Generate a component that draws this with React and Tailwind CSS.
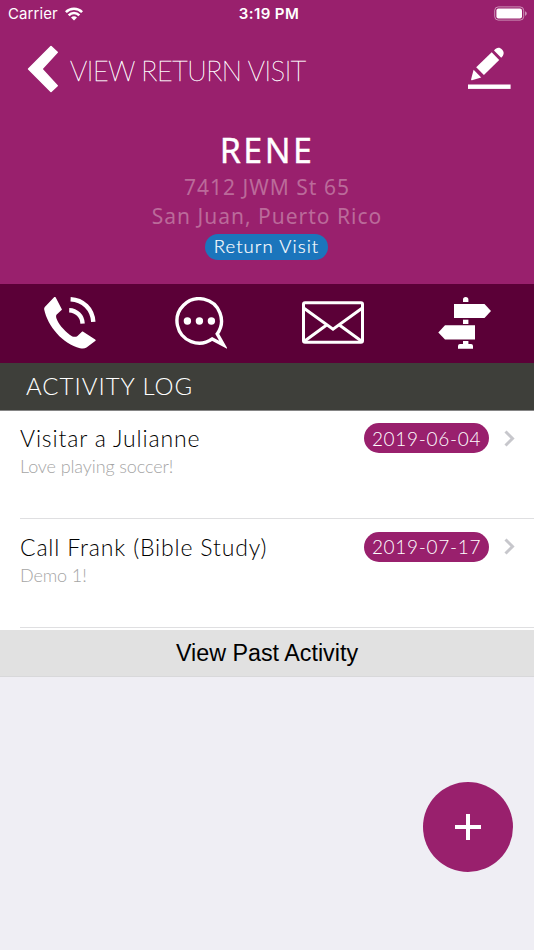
import React from "react";

const activities = [
  { id: 1, title: "Visitar a Julianne", note: "Love playing soccer!", date: "2019-06-04" },
  { id: 2, title: "Call Frank (Bible Study)", note: "Demo 1!", date: "2019-07-17" },
];

function StatusBar() {
  return (
    <div className="grid h-7 grid-cols-3 items-center pr-[7px] pl-2 font-['Inter',sans-serif] text-[15px] text-white">
      <div className="flex items-center gap-[7px]">
        <span className="tracking-[0.1px]">Carrier</span>
        <svg width="18" height="14" viewBox="0 0 18 14" fill="none" stroke="currentColor" strokeWidth="2.6">
          <path d="M0.9 5.1a11.5 11.5 0 0 1 16.2 0" />
          <path d="M3.7 8.3a7.4 7.4 0 0 1 10.6 0" />
          <path d="M9 13.6 6 10.6a4.3 4.3 0 0 1 6 0z" fill="currentColor" stroke="none" />
        </svg>
      </div>
      <div className="pl-[3px] text-center font-semibold tracking-[0.4px]">3:19 PM</div>
      <svg className="-mt-0.5 justify-self-end" width="33" height="15" viewBox="0 0 33 15">
        <rect x="0.7" y="0.9" width="29" height="13.2" rx="3.6" fill="none" stroke="#fff" strokeOpacity="0.5" />
        <rect x="2.4" y="2.6" width="25.6" height="9.8" rx="2" fill="#fff" />
        <path d="M31 5.3v4.6c1.2-.5 1.8-1.3 1.8-2.3S32.2 5.8 31 5.3z" fill="#fff" fillOpacity="0.5" />
      </svg>
    </div>
  );
}

function BackIcon() {
  return (
    <svg width="32" height="48" viewBox="0 0 32 48" fill="#fff" stroke="#fff" strokeWidth="1.6" strokeLinejoin="round">
      <path d="M24 1.6 30.2 7.3 14.8 24l15.4 16.7L24 46.4 1.6 24z" />
    </svg>
  );
}

function EditIcon() {
  return (
    <svg className="-mt-px" width="43" height="43" viewBox="0 0 43 43" fill="#fff">
      <path d="M26 3.5C28.5 0.3 31.5 0 34 2.4S36.2 8 33.2 10.7z" />
      <path d="M23.7 5.2 31.2 12.9 15.9 28 8.2 20.3z" />
      <path d="M5.6 22.8 13.2 30.5 4 33.3Q2.8 33.5 3.1 32.2z" />
      <rect x="0" y="37.500" width="42.6" height="4.4" />
    </svg>
  );
}

function PhoneIcon() {
  return (
    <svg width="52" height="52" viewBox="0 0 52 52">
      <path
        fill="#fff"
        d="M10.3 0 .8 10C.2 10.8 0 11.6.2 12.6 3.5 29 19 47.5 36 51.2 39 51.7 41 51.5 42.5 50.5L51.2 44C51.9 43.4 51.9 42.9 51.2 42.4L39.2 34.7C38.7 34.4 38.3 34.4 37.9 34.8L33.5 39C31.5 40.5 28.5 40 26 38 19.5 33 14 26.5 12.3 21 11.9 19 12 18 13 17.2L17.6 13.1C18 12.7 18 12.3 17.7 11.9L11.6.3C11.2-.3 10.8-.4 10.3 0z"
      />
      <path
        d="M26.6 2.2C39 2.8 48.5 12 49.3 24.9M25.2 13.2C32.5 13.4 38.4 19 38.6 26.6"
        fill="none"
        stroke="#fff"
        strokeWidth="4.4"
      />
    </svg>
  );
}

function ChatIcon() {
  return (
    <svg width="52" height="52" viewBox="0 0 52 52" fill="none" stroke="#fff" strokeWidth="3.4">
      <path d="M37.2 41.9A22.2 22.2 0 1 1 42.2 36.9L48.5 48z" />
      <g fill="#fff" stroke="none">
        <circle cx="12.4" cy="24" r="3.7" />
        <circle cx="24.4" cy="24" r="3.7" />
        <circle cx="36.4" cy="24" r="3.7" />
      </g>
    </svg>
  );
}

function MailIcon() {
  return (
    <svg width="62" height="43" viewBox="0 0 62 43" fill="none" stroke="#fff" strokeWidth="3">
      <rect x="1.5" y="1.8" width="59" height="39.4" rx="1.5" />
      <path d="M2 7.3 31 28.2 60 7.3M2 40.5 24.3 24.3M60 40.5 37.7 24.3" />
    </svg>
  );
}

function DirectionsIcon() {
  return (
    <svg width="53" height="52" viewBox="0 0 53 52" fill="#fff">
      <path d="M25 5V2.5Q25 0 27.7 0T30.4 2.5V5z" />
      <path d="M16 7H46.5L53 14 46.5 21H16z" />
      <path d="M25 22.7h5.4V27H25z" />
      <path d="M37 28.3H7L.3 35.5 7 42.6H37z" />
      <path d="M25 44h5.4v3H33Q35 47 35 49v2.8H20V49Q20 47 22 47h3z" />
    </svg>
  );
}

function ActivityRow({ activity }) {
  return (
    <div className="ml-5 h-[108.4px] border-b border-[#dfdfe1] pt-[12.3px] pr-[19px]">
      <div className="flex h-[30px] items-center">
        <h3 className="flex-1 text-[23px] leading-[30px] font-light tracking-[0.84px] text-black">{activity.title}</h3>
        <span className="flex h-[30px] w-[125px] items-center justify-center rounded-full bg-[#99206d] pt-px text-[19px] font-light tracking-[0.7px] text-white">
          {activity.date}
        </span>
        <svg className="ml-[15px]" width="11" height="17" viewBox="0 0 11 17" fill="none" stroke="#c7c7cc" strokeWidth="3">
          <path d="M1.5 1.5 8.5 8.5 1.5 15.5" />
        </svg>
      </div>
      <p className="text-[18px] leading-[27px] font-light tracking-[-0.1px] text-[#a5a5a5]">{activity.note}</p>
    </div>
  );
}

function App() {
  return (
    <div className="relative h-[950px] w-[534px] overflow-hidden bg-[#efeef4] font-['Lato',sans-serif]">
      <header className="h-[284px] bg-[#99206d]">
        <StatusBar />
        <div className="flex h-[82px] items-center pr-[23px] pl-[27px]">
          <BackIcon />
          <h1 className="ml-[11px] flex-1 pt-1 text-[27px] font-thin tracking-[-0.42px] text-white [-webkit-text-stroke:0.4px_white]">
            VIEW RETURN VISIT
          </h1>
          <EditIcon />
        </div>
        <div className="flex flex-col items-center pt-[18px] font-['Noto_Sans',sans-serif]">
          <h2 className="text-[34px] leading-[45px] font-normal tracking-[2.4px] text-white [-webkit-text-stroke:0.35px_white]">
            RENE
          </h2>
          <p className="text-center text-[21px] leading-[28.5px] tracking-[1px] text-[#bb6a9a]">
            7412 JWM St 65
            <br />
            San Juan, Puerto Rico
          </p>
          <span className="mt-[4px] mr-px flex h-[26px] w-[123px] items-center justify-center rounded-full bg-[#1b75bc] font-['Lato',sans-serif] text-[18.5px] font-light tracking-[1.1px] text-white [-webkit-text-stroke:0.2px_white]">
            Return Visit
          </span>
        </div>
      </header>

      <nav className="grid h-[79px] grid-cols-4 place-items-center bg-[#5b0037] px-1 pb-0.5">
        <PhoneIcon />
        <ChatIcon />
        <MailIcon />
        <DirectionsIcon />
      </nav>

      <div className="flex h-12 items-center border-b border-[#858585] bg-[#3e3f3a] pb-px pl-[26px] text-[24px] font-light tracking-[1px] text-white">
        ACTIVITY LOG
      </div>

      <div className="h-[219px] bg-white">
        {activities.map((activity) => (
          <ActivityRow key={activity.id} activity={activity} />
        ))}
      </div>
      <button className="block h-[47px] w-full border-b border-[#d8d8da] bg-[#e1e1e1] font-['Liberation_Sans',sans-serif] text-[23.3px] text-black">
        View Past Activity
      </button>

      <button className="absolute top-[782px] left-[423px] flex size-[90px] items-center justify-center rounded-full bg-[#99206d]">
        <svg width="26" height="26" viewBox="0 0 26 26" stroke="#fff" strokeWidth="4">
          <path d="M13 0V26M0 13H26" />
        </svg>
      </button>
    </div>
  );
}

export default App;
